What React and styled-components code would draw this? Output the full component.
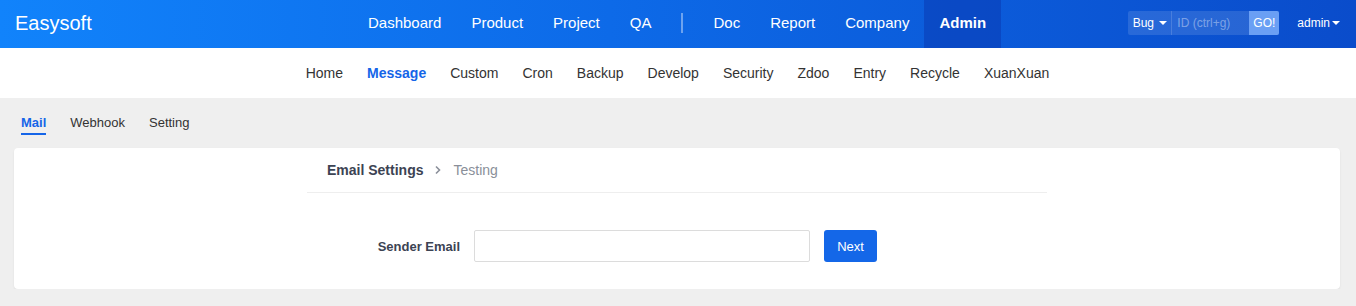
import React from 'react'
import styled, { createGlobalStyle } from 'styled-components'

const GlobalStyle = createGlobalStyle`
  html, body {
    margin: 0;
    padding: 0;
    background: #efefef;
    font-family: "Liberation Sans", Arial, sans-serif;
    color: #333;
  }
  * { box-sizing: border-box; }
`

const Header = styled.header`
  height: 48px;
  display: flex;
  align-items: center;
  padding: 0 15px;
  background: linear-gradient(90deg, #1183fb 0%, #0d6ae8 45%, #0a4ccb 100%);
  color: #fff;
`

const Logo = styled.div`
  font-size: 20px;
  width: 338px;
  flex: none;
  padding-bottom: 2px;
`

const MainNav = styled.nav`
  display: flex;
  align-items: center;
  height: 48px;
`

const MainItem = styled.a`
  display: flex;
  align-items: center;
  height: 48px;
  padding: 0 15px 4px;
  font-size: 15px;
  color: #fff;
  text-decoration: none;
  font-weight: ${p => (p.$active ? 'bold' : 'normal')};
  background: ${p => (p.$active ? 'rgba(8, 52, 170, 0.45)' : 'transparent')};
`

const Divider = styled.span`
  width: 2px;
  height: 20px;
  margin: 0 15px 2px;
  background: rgba(255, 255, 255, 0.4);
`

const Right = styled.div`
  margin-left: auto;
  display: flex;
  align-items: center;
  padding-bottom: 2px;
`

const Search = styled.div`
  display: flex;
  height: 24px;
  font-size: 12px;
  background: rgba(255, 255, 255, 0.12);
  border-radius: 2px;
  overflow: hidden;
`

const TypeSelect = styled.div`
  width: 44px;
  display: flex;
  align-items: center;
  justify-content: center;
  gap: 5px;
  color: #fff;
  font-size: 12px;
  border-right: 1px solid rgba(255, 255, 255, 0.15);
`

const Caret = styled.span`
  width: 0;
  height: 0;
  border-left: 4px solid transparent;
  border-right: 4px solid transparent;
  border-top: 4px solid #fff;
`

const IdInput = styled.div`
  width: 77px;
  display: flex;
  align-items: center;
  padding-left: 5px;
  color: rgba(255, 255, 255, 0.4);
`

const GoButton = styled.div`
  width: 30px;
  display: flex;
  align-items: center;
  justify-content: center;
  background: #6a9ff4;
  color: #fff;
`

const User = styled.div`
  display: flex;
  align-items: center;
  gap: 2px;
  margin-left: 18px;
  margin-right: 1px;
  font-size: 12px;
  color: #fff;
`

const SubNav = styled.nav`
  height: 50px;
  background: #fff;
  display: flex;
  align-items: center;
  justify-content: center;
  gap: 24px;
  padding-right: 1px;
`

const SubItem = styled.a`
  font-size: 14px;
  color: ${p => (p.$active ? '#1565e8' : '#333')};
  font-weight: ${p => (p.$active ? 'bold' : 'normal')};
  text-decoration: none;
`

const Tabs = styled.div`
  display: flex;
  gap: 24px;
  padding: 17px 21px 0;
  height: 50px;
`

const Tab = styled.a`
  font-size: 13px;
  height: 20px;
  line-height: 16px;
  color: ${p => (p.$active ? '#1565e8' : '#333')};
  font-weight: ${p => (p.$active ? 'bold' : 'normal')};
  border-bottom: 2px solid ${p => (p.$active ? '#1565e8' : 'transparent')};
  text-decoration: none;
`

const Card = styled.section`
  margin: 0 16px 0 14px;
  height: 141px;
  background: #fff;
  border-radius: 4px;
  box-shadow: 0 1px 2px rgba(0, 0, 0, 0.08);
`

const Inner = styled.div`
  width: 740px;
  margin: 0 auto;
`

const Breadcrumb = styled.div`
  height: 45px;
  display: flex;
  align-items: center;
  gap: 11px;
  padding: 0 20px;
  border-bottom: 1px solid #eee;
  font-size: 14px;
`

const Crumb = styled.span`
  color: ${p => (p.$current ? '#8a8f99' : '#3c4353')};
  font-weight: ${p => (p.$current ? 'normal' : 'bold')};
`

const FormRow = styled.div`
  display: grid;
  grid-template-columns: 153px 336px auto;
  column-gap: 14px;
  align-items: center;
  margin-top: 37px;
`

const Label = styled.label`
  text-align: right;
  font-size: 13px;
  font-weight: bold;
  color: #3c4353;
`

const Input = styled.input`
  height: 32px;
  border: 1px solid #dcdcdc;
  border-radius: 2px;
  padding: 0 8px;
  font-size: 13px;
  outline: none;
`

const Button = styled.button`
  width: 53px;
  height: 32px;
  border: none;
  border-radius: 3px;
  background: #1467e8;
  color: #fff;
  font-size: 13px;
  font-family: inherit;
`

const Chevron = () => (
  <svg width="8" height="10" viewBox="0 0 8 10">
    <path d="M2 1.5 L5.5 5 L2 8.5" fill="none" stroke="#8a8f99" strokeWidth="1.6" />
  </svg>
)

const mainItems = ['Dashboard', 'Product', 'Project', 'QA']
const moreItems = ['Doc', 'Report', 'Company', 'Admin']
const subItems = ['Home', 'Message', 'Custom', 'Cron', 'Backup', 'Develop', 'Security', 'Zdoo', 'Entry', 'Recycle', 'XuanXuan']

export default function App() {
  return (
    <>
      <GlobalStyle />
      <Header>
        <Logo>Easysoft</Logo>
        <MainNav>
          {mainItems.map(item => <MainItem key={item}>{item}</MainItem>)}
          <Divider />
          {moreItems.map(item => (
            <MainItem key={item} $active={item === 'Admin'}>{item}</MainItem>
          ))}
        </MainNav>
        <Right>
          <Search>
            <TypeSelect>Bug <Caret /></TypeSelect>
            <IdInput>ID (ctrl+g)</IdInput>
            <GoButton>GO!</GoButton>
          </Search>
          <User>admin <Caret /></User>
        </Right>
      </Header>
      <SubNav>
        {subItems.map(item => (
          <SubItem key={item} $active={item === 'Message'}>{item}</SubItem>
        ))}
      </SubNav>
      <Tabs>
        <Tab $active>Mail</Tab>
        <Tab>Webhook</Tab>
        <Tab>Setting</Tab>
      </Tabs>
      <Card>
        <Inner>
          <Breadcrumb>
            <Crumb>Email Settings</Crumb>
            <Chevron />
            <Crumb $current>Testing</Crumb>
          </Breadcrumb>
          <FormRow>
            <Label>Sender Email</Label>
            <Input />
            <Button>Next</Button>
          </FormRow>
        </Inner>
      </Card>
    </>
  )
}
